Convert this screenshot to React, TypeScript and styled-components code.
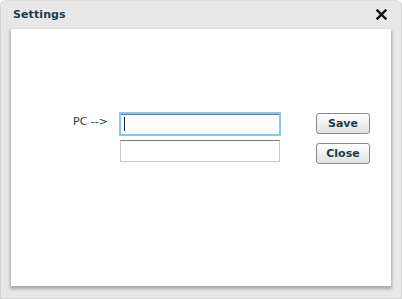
import * as React from 'react'
import styled, { createGlobalStyle } from 'styled-components';

const GlobalStyle = createGlobalStyle`
    html, body {
        margin: 0;
        padding: 0;
        background: #ffffff;
    }
    body {
        font-family: "DejaVu Sans", Verdana, sans-serif;
    }
`
const Window = styled.div`
    box-sizing: border-box;
    width: 402px;
    height: 299px;
    background: #e8e8e8;
    border: 1px solid #d2d2d2;
    border-top-color: #e0e0e0;
    border-radius: 6px 6px 0 0;
    display: flex;
    flex-direction: column;
    padding: 0 10px 12px 10px;
`
const TitleBar = styled.div`
    height: 28px;
    display: flex;
    align-items: center;
    justify-content: space-between;
    padding: 0 4px 0 2px;
`
const Title = styled.span`
    font-size: 11px;
    font-weight: bold;
    color: #1d3d47;
    letter-spacing: 0.1px;
    margin-top: -1px;
`
const CloseIcon = styled.button`
    border: 0;
    background: none;
    padding: 0;
    width: 11px;
    height: 11px;
    display: flex;
    cursor: pointer;
    margin-top: -2px;
`
const Panel = styled.div`
    flex: 1;
    background: #ffffff;
    box-shadow: 0 2px 3px 1px rgba(0, 0, 0, 0.28);
    padding-top: 83px;
`
const Form = styled.div`
    display: grid;
    grid-template-columns: 97px 162px auto;
    column-gap: 11px;
    align-items: start;
`
const Label = styled.label`
    font-size: 11px;
    color: #1d3d47;
    text-align: right;
    padding-top: 3px;
    white-space: pre;
`
const Fields = styled.div`
    display: flex;
    flex-direction: column;
    gap: 4px;
`
const FieldWrap = styled.span<{ $active?: boolean }>`
    position: relative;
    display: block;
    margin: ${p => p.$active ? '0' : '0 1px'};
`
const TextBox = styled.input<{ $active?: boolean }>`
    box-sizing: border-box;
    display: block;
    width: 100%;
    height: ${p => p.$active ? '24px' : '22px'};
    border: 1px solid #c9c9c9;
    border-top-color: #7a7a7a;
    outline: none;
    font-size: 11px;
    font-family: "DejaVu Sans", Verdana, sans-serif;
    padding: 0 4px;
    ${p => p.$active && `
        border: 2px solid #86c6f2;
        box-shadow: inset 0 1px 0 #6f7d86;
    `}
`
const Caret = styled.span`
    position: absolute;
    left: 5px;
    top: 5px;
    width: 1px;
    height: 14px;
    background: #1d2a30;
`
const Buttons = styled.div`
    display: flex;
    flex-direction: column;
    gap: 9px;
    padding: 1px 0 0 24px;
`
const Button = styled.button`
    box-sizing: border-box;
    width: 54px;
    height: 21px;
    border: 1px solid #8a8a8a;
    border-radius: 3px;
    background: linear-gradient(#ffffff, #ededed 60%, #e2e2e2);
    font-family: "DejaVu Sans", Verdana, sans-serif;
    font-size: 11px;
    font-weight: bold;
    color: #1d3d47;
    padding: 0;
    cursor: pointer;
`

export default function App() {
    return (
        <>
            <GlobalStyle />
            <Window>
                <TitleBar>
                    <Title>Settings</Title>
                    <CloseIcon aria-label="close">
                        <svg width="11" height="11" viewBox="0 0 11 11">
                            <path d="M1.5 1.5 L9.5 9.5 M9.5 1.5 L1.5 9.5" stroke="#111" strokeWidth="2.4" strokeLinecap="square" />
                        </svg>
                    </CloseIcon>
                </TitleBar>
                <Panel>
                    <Form>
                        <Label>PC --&gt;</Label>
                        <Fields>
                            <FieldWrap $active>
                                <TextBox $active />
                                <Caret />
                            </FieldWrap>
                            <FieldWrap>
                                <TextBox />
                            </FieldWrap>
                        </Fields>
                        <Buttons>
                            <Button>Save</Button>
                            <Button>Close</Button>
                        </Buttons>
                    </Form>
                </Panel>
            </Window>
        </>
    )
}
